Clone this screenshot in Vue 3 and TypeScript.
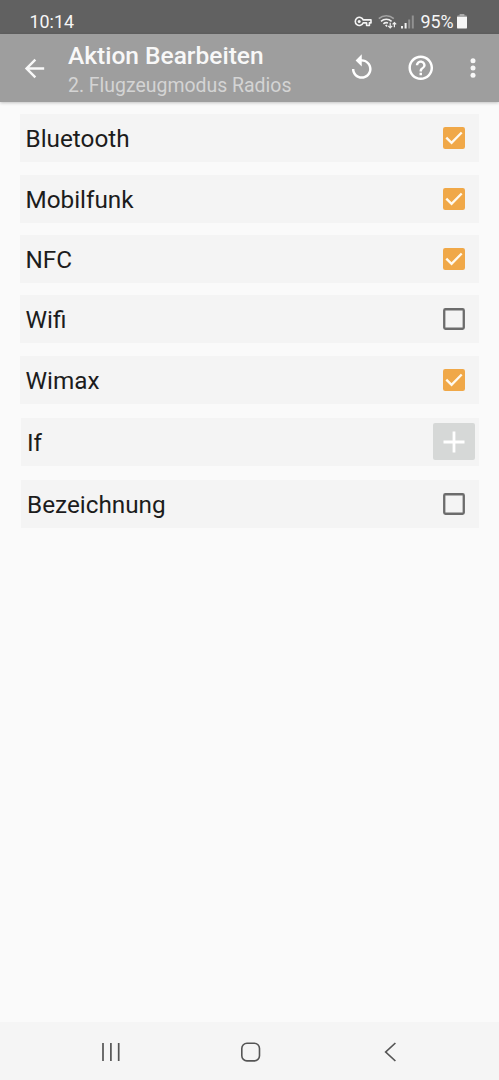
<script setup lang="ts">
import { ref } from 'vue'

interface Row {
  label: string
  kind: 'check' | 'add'
  checked: boolean
}

const radios = ref<Row[]>([
  { label: 'Bluetooth', kind: 'check', checked: true },
  { label: 'Mobilfunk', kind: 'check', checked: true },
  { label: 'NFC', kind: 'check', checked: true },
  { label: 'Wifi', kind: 'check', checked: false },
  { label: 'Wimax', kind: 'check', checked: true },
])

const extras = ref<Row[]>([
  { label: 'If', kind: 'add', checked: false },
  { label: 'Bezeichnung', kind: 'check', checked: false },
])

function toggle(row: Row) {
  if (row.kind === 'check') row.checked = !row.checked
}
</script>

<template>
  <div class="screen">
    <div class="status">
      <span class="clock">10:14</span>
      <svg class="key" width="18" height="11" viewBox="0 0 18 11">
        <path d="M9.2 3.9H17v3h-1.6v2.6h-2.8V6.9H9.2A4.1 4.1 0 1 1 9.2 3.9z" fill="none" stroke="#f4f4f4" stroke-width="1.6" stroke-linejoin="round" />
        <circle cx="5.2" cy="5.4" r="1.5" fill="#f4f4f4" />
      </svg>
      <svg class="wifi" width="19" height="15" viewBox="0 0 19 15">
        <g fill="none" stroke-width="1.6">
          <path d="M.8 4.6a11.5 11.5 0 0 1 15 0" stroke="#a2a2a2" />
          <path d="M3 7.3a8 8 0 0 1 10.6 0" stroke="#f0f0f0" />
          <path d="M5.4 9.8a4.6 4.6 0 0 1 4.6-.9" stroke="#f0f0f0" />
        </g>
        <path d="M7 11.2l1.6-.7 1 1.6-1.1 1z" fill="#f0f0f0" />
        <path d="M12.2 8.7v5M10.2 11.8l2 2 2-2M16.4 13.2V8.8M14.6 10.4l1.8-1.8 1.8 1.8" fill="none" stroke="#f0f0f0" stroke-width="1.2" />
      </svg>
      <svg class="signal" width="13" height="14" viewBox="0 0 13 14">
        <path d="M0 11h2v2.5H0zM3.6 8h2v5.5h-2z" fill="#f0f0f0" />
        <path d="M7.2 4.5h2v9h-2zM10.8.5h2v13h-2z" fill="#929292" />
      </svg>
      <span class="percent">95%</span>
      <svg class="battery" width="10" height="15" viewBox="0 0 10 15">
        <path d="M2.6 0h4.800v2H2.600z" fill="#aaa" />
        <rect y="1.600" width="10" height="3" rx="1.200" fill="#aaa" />
        <path d="M0 3h10v10.400q0 1.200-1.200 1.200H1.200Q0 14.600 0 13.400z" fill="#f6f6f6" />
      </svg>
    </div>

    <header class="bar">
      <svg class="back" width="29" height="29" viewBox="0 0 24 24">
        <path d="M20 11H7.830l5.590-5.590L12 4l-8 8 8 8 1.410-1.410L7.830 13H20v-2z" fill="#f8f8f8" />
      </svg>
      <div class="titles">
        <h1>Aktion Bearbeiten</h1>
        <p>2. Flugzeugmodus Radios</p>
      </div>
      <svg class="undo" width="29.500" height="29.500" viewBox="0 0 24 24">
        <path d="M12 5V1L7 6l5 5V7c3.310 0 6 2.690 6 6s-2.690 6-6 6-6-2.690-6-6H4c0 4.420 3.580 8 8 8s8-3.580 8-8-3.580-8-8-8z" fill="#fff" />
      </svg>
      <svg class="help" width="29.500" height="29.500" viewBox="0 0 24 24">
        <path d="M11 18h2v-2h-2v2zm1-16C6.480 2 2 6.480 2 12s4.480 10 10 10 10-4.480 10-10S17.520 2 12 2zm0 18c-4.410 0-8-3.590-8-8s3.590-8 8-8 8 3.590 8 8-3.590 8-8 8zm0-14c-2.210 0-4 1.790-4 4h2c0-1.100.9-2 2-2s2 .9 2 2c0 2-3 1.750-3 5h2c0-2.250 3-2.500 3-5 0-2.210-1.790-4-4-4z" fill="#fff" />
      </svg>
      <svg class="more" width="6" height="22" viewBox="0 0 6 22">
        <g fill="#f8f8f8">
          <circle cx="3" cy="3.700" r="2.500" />
          <circle cx="3" cy="11" r="2.500" />
          <circle cx="3" cy="18.300" r="2.500" />
        </g>
      </svg>
    </header>

    <main>
      <section v-for="(group, g) in [radios, extras]" :key="g" :class="g ? 'extras' : 'radios'">
        <div v-for="row in group" :key="row.label" class="row" @click="toggle(row)">
          <span class="label">{{ row.label }}</span>
          <span v-if="row.kind === 'add'" class="add">
            <svg width="22" height="22" viewBox="0 0 22 22">
              <path d="M11 .5v21M.5 11h21" stroke="#fff" stroke-width="2.800" />
            </svg>
          </span>
          <svg v-else class="box" width="22" height="22" viewBox="3 3 18 18">
            <template v-if="row.checked">
              <rect x="3" y="3" width="18" height="18" rx="1.800" fill="#f0a848" />
              <path d="M5.700 11.700l4.300 4.300 8.300-8.500" fill="none" stroke="#fffaf0" stroke-width="1.900" />
            </template>
            <rect v-else x="4" y="4" width="16" height="16" rx="1" fill="none" stroke="#6c6c6c" stroke-width="1.900" />
          </svg>
        </div>
      </section>
    </main>

    <nav>
      <svg width="20" height="20" viewBox="0 0 20 20">
        <path d="M2 1v18M9.900 1v18M17.700 1v18" stroke="#555" stroke-width="1.700" />
      </svg>
      <svg width="20" height="20" viewBox="0 0 20 20">
        <rect x=".8" y="1.200" width="17.700" height="17.700" rx="5.200" fill="none" stroke="#555" stroke-width="1.600" />
      </svg>
      <svg width="20" height="20" viewBox="0 0 20 20">
        <path d="M15.400 1L5.700 10l9.700 9" fill="none" stroke="#555" stroke-width="1.700" />
      </svg>
    </nav>
  </div>
</template>

<style>
body {
  margin: 0;
  background: #fafafa;
}
</style>

<style scoped>
.screen {
  width: 499px;
  height: 1080px;
  display: flex;
  flex-direction: column;
  overflow: hidden;
  background: #fafafa;
  font-family: Roboto, "Liberation Sans", sans-serif;
}

svg {
  display: block;
  flex: none;
}

.status {
  height: 34px;
  flex: none;
  box-sizing: border-box;
  padding: 9px 32.500px 0 29.500px;
  display: flex;
  align-items: center;
  background: #616161;
  color: #f6f6f6;
  font-size: 17.900px;
  line-height: 25px;
}

.clock {
  flex: 1;
}

.wifi {
  margin-left: 6px;
}

.signal {
  margin-left: 4px;
}

.percent {
  width: 33px;
  margin: 0 3px 0 7px;
  white-space: nowrap;
}

.bar {
  height: 68px;
  flex: none;
  box-sizing: border-box;
  padding: 0 23.500px 0 19.500px;
  display: flex;
  align-items: center;
  background: #9e9e9e;
  box-shadow: 0 1px 3px rgba(0, 0, 0, 0.22);
}

.titles {
  flex: 1;
  margin-left: 19.500px;
  padding-top: 5px;
  white-space: nowrap;
}

h1 {
  margin: 0;
  font-size: 24.500px;
  line-height: 30px;
  font-weight: 500;
  color: #f8f8f8;
}

p {
  margin: 0;
  font-size: 19.450px;
  line-height: 29px;
  color: #d4d4d4;
}

.help {
  margin-left: 29px;
}

.more {
  margin-left: 34.500px;
}

main {
  flex: 1;
}

.radios,
.extras {
  display: flex;
  flex-direction: column;
}

.radios {
  gap: 12.400px;
  padding: 12.300px 20px 0 19.500px;
}

.extras {
  gap: 14px;
  padding: 14px 20px 0 21px;
}

.row {
  height: 48px;
  box-sizing: border-box;
  padding: 0 14px 0 6px;
  display: flex;
  align-items: center;
  justify-content: space-between;
  background: #f4f4f4;
}

.label {
  font-size: 24.300px;
  line-height: 30px;
  padding-top: 2px;
  color: #1c1c1c;
}

.add {
  width: 42px;
  height: 37px;
  margin-right: -10px;
  display: flex;
  align-items: center;
  justify-content: center;
  border-radius: 2px;
  background: #d6d8d7;
}

nav {
  height: 58px;
  flex: none;
  box-sizing: border-box;
  padding: 2px 99px 0 101px;
  display: flex;
  align-items: center;
  justify-content: space-between;
  background: #f5f5f5;
}
</style>
